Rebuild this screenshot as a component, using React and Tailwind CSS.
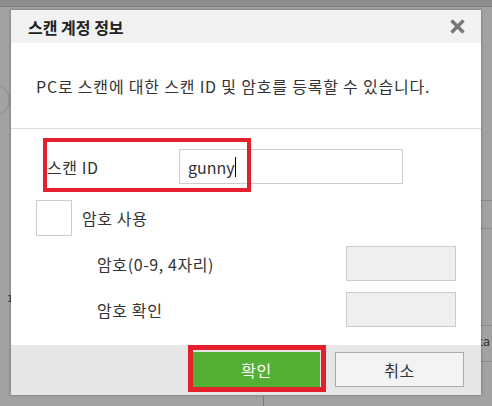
import React from "react";

const font = { fontFamily: '"Noto Sans CJK KR", "Noto Sans", sans-serif' };

const App = () => {
  return (
    <div className="relative w-[492px] h-[406px] overflow-hidden bg-[#a2a2a2]" style={font}>
      {/* page behind the modal */}
      <div className="h-[7px] bg-[#8d8d8d] border-b border-[#7e7e7e]" />
      <div className="absolute left-[-22px] top-[84px] w-[32px] h-[32px] rounded-full border border-[#8a8a8a]" />
      <div className="absolute left-[6px] top-[288px] text-[13px] text-[#333]">ㅍ</div>
      <div className="absolute right-0 top-[200px] w-[12px] border-t border-[#8a8a8a]" />
      <div className="absolute right-0 top-[228px] w-[12px] border-t border-[#8a8a8a]" />
      <div className="absolute right-0 top-[325px] w-[12px] border-t border-[#8a8a8a]" />
      <div className="absolute right-0 top-[361px] w-[12px] border-t border-[#8a8a8a]" />
      <div className="absolute right-[2px] top-[331px] text-[13px] text-[#333]">ca</div>
      <div className="absolute left-[263px] top-[396px] h-[12px] border-l border-[#7a7a7a]" />

      {/* modal */}
      <div className="absolute left-[11px] top-[10px] w-[470px] h-[385px] bg-white flex flex-col shadow-[0_0_3px_rgba(0,0,0,0.35)]">
        <div className="h-[33px] bg-[#f2f2f2] flex items-center justify-between pl-[17px] pr-[16px]">
          <span className="text-[16px] font-bold text-[#222]">스캔 계정 정보</span>
          <svg width="15" height="15" viewBox="0 0 15 15">
            <path d="M1.5 1.5 L13.5 13.5 M13.5 1.5 L1.5 13.5" stroke="#777" strokeWidth="3.4" />
          </svg>
        </div>

        <div className="h-[85px] flex items-center pl-[25px] text-[16px] tracking-[0.8px] text-[#333]">
          PC로 스캔에 대한 스캔 ID 및 암호를 등록할 수 있습니다.
        </div>

        <div className="flex-1 border-t border-[#dddddd] flex flex-col tracking-[0.6px]">
          <div className="mt-[20px] h-[35px] flex items-center">
            <span className="w-[168px] pl-[36px] text-[16px] text-[#333]">스캔 ID</span>
            <div className="w-[224px] h-[35px] border border-[#cccccc] flex items-center pl-[8px] text-[16px] tracking-normal text-[#333]">
              gunny<span className="w-px h-[20px] bg-black" />
            </div>
          </div>

          <div className="mt-[16px] flex items-center">
            <div className="ml-[25px] w-[36px] h-[36px] border border-[#cccccc] bg-white" />
            <span className="ml-[10px] text-[16px] text-[#333]">암호 사용</span>
          </div>

          <div className="mt-[10px] h-[35px] flex items-center">
            <span className="w-[335px] pl-[86px] text-[16px] text-[#333]">암호(0-9, 4자리)</span>
            <div className="w-[110px] h-[35px] border border-[#cccccc] bg-[#efefef]" />
          </div>

          <div className="mt-[11px] h-[35px] flex items-center">
            <span className="w-[335px] pl-[86px] text-[16px] text-[#333]">암호 확인</span>
            <div className="w-[110px] h-[35px] border border-[#cccccc] bg-[#efefef]" />
          </div>
        </div>

        <div className="h-[50px] bg-[#e6e6e6] flex items-start justify-end pt-[7px] pr-[17px] gap-[15px]">
          <button className="w-[127px] h-[35px] bg-[#53b035] text-white text-[16px] tracking-[0.6px]">확인</button>
          <button className="w-[129px] h-[35px] bg-[#f3f3f3] border border-[#aaaaaa] text-[#333] text-[16px] tracking-[0.6px]">취소</button>
        </div>

        {/* red highlight boxes */}
        <div className="absolute left-[32px] top-[128px] w-[208px] h-[54px] border-4 border-[#e3202b]" />
        <div className="absolute left-[177px] top-[335px] w-[138px] h-[47px] border-[5px] border-[#e3202b]" />
      </div>
    </div>
  );
};

export default App;
